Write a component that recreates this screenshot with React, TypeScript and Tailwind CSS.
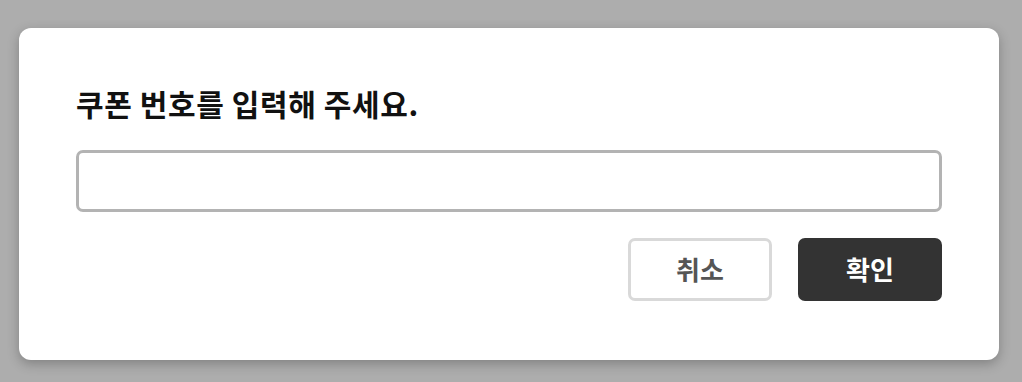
import React, { useState } from 'react';

export default function App() {
  const [code, setCode] = useState('');

  return (
    <div className="w-[1022px] h-[382px] bg-[#adadad] pt-[28px] px-[19px]" style={{ fontFamily: '"Noto Sans CJK KR", "Noto Sans", sans-serif' }}>
      <div className="w-[980px] h-[332px] bg-white rounded-[12px] shadow-[0_4px_12px_rgba(0,0,0,0.25)] px-[57px] pt-[55px]">
        <h2 className="text-[30px] leading-[40px] font-bold text-[#111] tracking-[0.6px]">쿠폰 번호를 입력해 주세요.</h2>
        <input
          value={code}
          onChange={e => setCode(e.target.value)}
          className="mt-[27px] block w-full h-[62px] border-[3px] border-[#b3b3b3] rounded-[7px] px-4 text-[20px] outline-none"
        />
        <div className="flex justify-end gap-[26px] mt-[26px]">
          <button className="w-[144px] h-[63px] border-[3px] border-[#d9d9d9] rounded-[7px] bg-white text-[#555] text-[26px] font-bold pb-[3px]">취소</button>
          <button className="w-[144px] h-[63px] rounded-[7px] bg-[#333] text-white text-[26px] font-bold pb-[3px]">확인</button>
        </div>
      </div>
    </div>
  );
}
